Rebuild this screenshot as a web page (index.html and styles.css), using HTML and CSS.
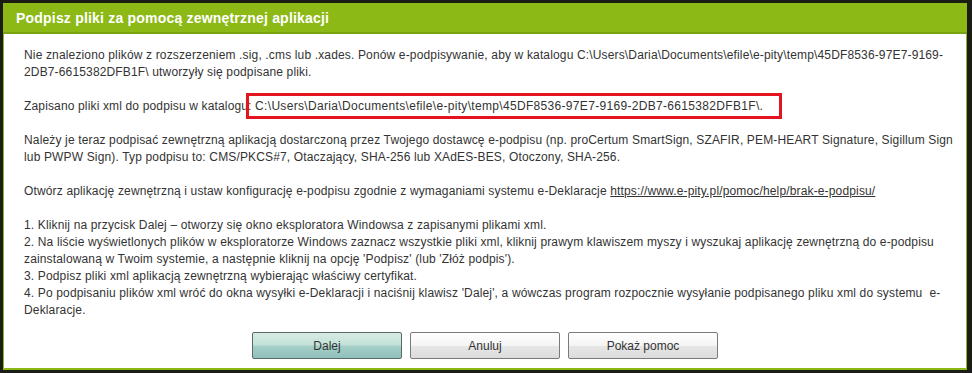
FILE: index.html
```html
<!DOCTYPE html>
<html lang="pl">
<head>
<meta charset="utf-8">
<title>Podpisz pliki za pomocą zewnętrznej aplikacji</title>
<link rel="stylesheet" href="styles.css">
</head>
<body>
<div class="dialog">
  <div class="titlebar">Podpisz pliki za pomocą zewnętrznej aplikacji</div>
  <div class="content">
    <p class="text">Nie znaleziono plików z rozszerzeniem .sig, .cms lub .xades. Ponów e-podpisywanie, aby w katalogu C:\Users\Daria\Documents\efile\e-pity\temp\45DF8536-97E7-9169-2DB7-6615382DFB1F\ utworzyły się podpisane pliki.<br><br>Zapisano pliki xml do podpisu w katalogu: <span class="path">C:\Users\Daria\Documents\efile\e-pity\temp\45DF8536-97E7-9169-2DB7-6615382DFB1F\.</span><br><br>Należy je teraz podpisać zewnętrzną aplikacją dostarczoną przez Twojego dostawcę e-podpisu (np. proCertum SmartSign, SZAFIR, PEM-HEART Signature, Sigillum Sign lub PWPW Sign). Typ podpisu to: CMS/PKCS#7, Otaczający, SHA-256 lub XAdES-BES, Otoczony, SHA-256.<br><br>Otwórz aplikację zewnętrzną i ustaw konfigurację e-podpisu zgodnie z wymaganiami systemu e-Deklaracje <a class="link" href="#">https://www.e-pity.pl/pomoc/help/brak-e-podpisu/</a><br><br>1. Kliknij na przycisk Dalej – otworzy się okno eksploratora Windowsa z zapisanymi plikami xml.<br>2. Na liście wyświetlonych plików w eksploratorze Windows zaznacz wszystkie pliki xml, kliknij prawym klawiszem myszy i wyszukaj aplikację zewnętrzną do e-podpisu zainstalowaną w Twoim systemie, a następnie kliknij na opcję 'Podpisz' (lub 'Złóż podpis').<br>3. Podpisz pliki xml aplikacją zewnętrzną wybierając właściwy certyfikat.<br>4. Po podpisaniu plików xml wróć do okna wysyłki e-Deklaracji i naciśnij klawisz 'Dalej', a wówczas program rozpocznie wysyłanie podpisanego pliku xml do systemu&nbsp; e-Deklaracje.</p>
    <div class="buttons">
      <button class="btn btn-primary">Dalej</button>
      <button class="btn">Anuluj</button>
      <button class="btn">Pokaż pomoc</button>
    </div>
  </div>
</div>
</body>
</html>
```
FILE: styles.css
```css
html, body {
  margin: 0;
  padding: 0;
  height: 100%;
}
body {
  background: #1b1d15;
  padding: 3px 5px 0 3px;
  box-sizing: border-box;
  font-family: "Liberation Sans", Arial, sans-serif;
}
.dialog {
  width: 964px;
  box-sizing: border-box;
  border: 1px solid #8cb915;
  border-top: 0;
  border-bottom-width: 2px;
  background: #ffffff;
}
.titlebar {
  margin: 0 -1px;
  height: 29px;
  border-bottom: 2px solid #7aa312;
  background: #8cb915;
  color: #ffffff;
  font-weight: bold;
  font-size: 14px;
  letter-spacing: 0.2px;
  line-height: 31px;
  padding-left: 13px;
}
.content {
  padding: 13px 12px 9px 20px;
}
.text {
  margin: 0;
  font-size: 12px;
  line-height: 17px;
  letter-spacing: 0.15px;
  color: #333333;
}
.path {
  position: relative;
  letter-spacing: 0.32px;
}
.path::after {
  content: "";
  position: absolute;
  left: -9px;
  right: -19px;
  top: -6px;
  bottom: -6px;
  border: 3px solid #e3141f;
}
.link {
  color: #333333;
  text-decoration: underline;
}
.buttons {
  display: flex;
  justify-content: center;
  gap: 8px;
  margin-top: 13px;
  margin-left: -8px;
}
.btn {
  width: 150px;
  height: 27px;
  border: 1px solid #7a7a7a;
  border-radius: 2px;
  background: linear-gradient(to bottom, #ffffff 0%, #f4f4f4 50%, #e6e6e6 52%, #dcdcdc 100%);
  font-family: "Liberation Sans", Arial, sans-serif;
  font-size: 12px;
  color: #333333;
  padding: 0;
}
.btn-primary {
  border-color: #5c6a68;
  background: linear-gradient(to bottom, #d6ece4 0%, #c3e1d8 48%, #a6cfc9 52%, #8fc0bb 100%);
}
```
